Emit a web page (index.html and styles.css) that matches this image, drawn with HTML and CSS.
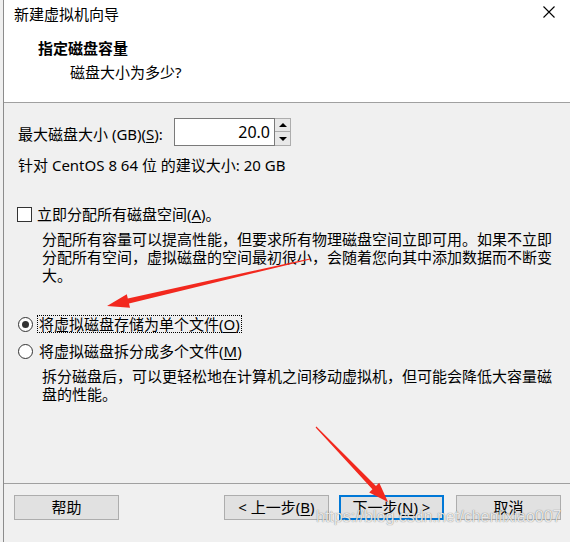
FILE: index.html
```html
<!DOCTYPE html>
<html lang="zh-CN">
<head>
    <meta charset="UTF-8">
    <title>新建虚拟机向导</title>
    <link rel="stylesheet" href="styles.css">
</head>
<body>
    <div class="window">
        <div class="head">
            <div class="titlebar">
                <span class="title">新建虚拟机向导</span>
                <svg class="close" width="12" height="12" viewBox="0 0 12 12">
                    <path d="M0.5 0.5 L11.5 11.5 M11.5 0.5 L0.5 11.5" stroke="#000" stroke-width="1.1" fill="none"/>
                </svg>
            </div>
            <div class="step-title">指定磁盘容量</div>
            <div class="step-sub">磁盘大小为多少?</div>
        </div>

        <div class="content">
            <div class="size-row">
                <span class="size-label">最大磁盘大小 (GB)(<u>S</u>):</span>
                <div class="spin">
                    <div class="spin-input">20.0</div>
                    <div class="spin-btns">
                        <span class="spin-btn"><span class="tri-up"></span></span>
                        <span class="spin-btn"><span class="tri-down"></span></span>
                    </div>
                </div>
            </div>
            <p class="hint">针对 CentOS 8 64 位 的建议大小: 20 GB</p>

            <div class="option check-row">
                <span class="checkbox"></span>
                <span>立即分配所有磁盘空间(<u>A</u>)。</span>
            </div>
            <p class="desc">分配所有容量可以提高性能，但要求所有物理磁盘空间立即可用。如果不立即<br>分配所有空间，虚拟磁盘的空间最初很小，会随着您向其中添加数据而不断变<br>大。</p>

            <div class="option radio-row first">
                <span class="radio checked"></span>
                <span class="focus">将虚拟磁盘存储为单个文件(<u>O</u>)</span>
            </div>
            <div class="option radio-row">
                <span class="radio"></span>
                <span class="plain">将虚拟磁盘拆分成多个文件(<u>M</u>)</span>
            </div>
            <p class="desc">拆分磁盘后，可以更轻松地在计算机之间移动虚拟机，但可能会降低大容量磁<br>盘的性能。</p>
        </div>

        <div class="footer">
            <button class="btn">帮助</button>
            <div class="nav">
                <button class="btn">&lt; 上一步(<u>B</u>)</button>
                <button class="btn default">下一步(<u>N</u>) &gt;</button>
                <button class="btn cancel">取消</button>
            </div>
        </div>
    </div>

    <!-- red annotation arrows -->
    <svg class="marks" width="570" height="542" viewBox="0 0 570 542">
        <polygon fill="#f2281e" points="310.1,259.5 129,303.4 130,307.8 107,306 126.8,294.2 127.8,298.6 309.9,258.5"/>
        <polygon fill="#f2281e" points="315.6,427.4 372.4,489.3 369.2,492.4 388,502 379.2,482.8 376,485.9 316.4,426.6"/>
    </svg>
    <div class="watermark">https://blog.csdn.net/chenlixiao007</div>
</body>
</html>
```

FILE: styles.css
```css
body {
    margin: 0;
    background-color: #f0f0f0;
    font-family: "Noto Sans", "Noto Sans CJK SC", sans-serif;
    font-size: 15px;
    color: #000;
}

u {
    text-decoration: underline;
    text-underline-offset: 2px;
}

.window {
    margin-left: 3px;
    border-left: 1px solid #8c8c8c;
    height: 542px;
    display: flex;
    flex-direction: column;
}

/* white header */
.head {
    background-color: #fff;
    height: 102px;
    border-bottom: 1px solid #a0a0a0;
}

.titlebar {
    height: 27px;
    display: flex;
    align-items: center;
    justify-content: space-between;
    padding: 0 15px 0 10px;
}

.title {
    line-height: 20px;
}

.close {
    display: block;
    margin-top: -3px;
}

.step-title {
    margin: 9px 0 0 34px;
    font-weight: bold;
    line-height: 24px;
}

.step-sub {
    margin-left: 66px;
    line-height: 24px;
}

/* body */
.content {
    flex: 1;
    padding: 15px 0 0 14px;
}

.size-row {
    display: flex;
    align-items: center;
    height: 28px;
}

.size-label {
    width: 156px;
    flex: none;
    line-height: 18px;
    margin-top: 3px;
}

.spin {
    display: flex;
    height: 28px;
}

.spin-input {
    width: 101px;
    height: 28px;
    box-sizing: border-box;
    border: 1px solid #7a7a7a;
    background-color: #fff;
    text-align: right;
    padding-right: 4px;
    line-height: 26px;
    font-size: 16px;
}

.spin-btns {
    display: flex;
    flex-direction: column;
    width: 16px;
}

.spin-btn {
    height: 14px;
    box-sizing: border-box;
    border: 1px solid #adadad;
    border-left: none;
    background-color: #e8e8e8;
    display: flex;
    align-items: center;
    justify-content: center;
}

.spin-btn + .spin-btn {
    border-top: none;
}

.tri-up {
    border-left: 4px solid transparent;
    border-right: 4px solid transparent;
    border-bottom: 4px solid #000;
}

.tri-down {
    border-left: 4px solid transparent;
    border-right: 4px solid transparent;
    border-top: 4px solid #000;
}

.hint {
    margin: 10px 0 0;
    line-height: 18px;
}

.option {
    display: flex;
    align-items: center;
    height: 18px;
    line-height: 18px;
}

.check-row {
    margin-top: 31px;
}

.checkbox {
    width: 13px;
    height: 13px;
    border: 1px solid #333;
    background-color: #fff;
    margin: 0 5px 0 -1px;
}

.desc {
    margin: 7px 0 0 24px;
    white-space: nowrap;
    line-height: 18px;
}

.radio-row.first {
    margin-top: 31px;
}

.radio-row + .radio-row {
    margin-top: 9px;
}

.radio {
    width: 13px;
    height: 13px;
    border: 1px solid #333;
    border-radius: 50%;
    background-color: #fff;
    margin-right: 4px;
    display: flex;
    align-items: center;
    justify-content: center;
}

.radio.checked::after {
    content: "";
    width: 7px;
    height: 7px;
    border-radius: 50%;
    background-color: #333;
}

.focus {
    border: 1px dotted #000;
    padding: 0 1px;
    line-height: 16px;
}

.plain {
    padding-left: 2px;
}

/* bottom buttons */
.footer {
    border-top: 1px solid #a0a0a0;
    height: 47px;
    padding: 11px 9px 0 10px;
    display: flex;
    justify-content: space-between;
    align-items: flex-start;
}

.btn {
    width: 105px;
    height: 25px;
    padding: 0;
    border: 1px solid #adadad;
    background-color: #e1e1e1;
    font-family: inherit;
    font-size: 15px;
    color: #000;
    line-height: 21px;
}

.btn.default {
    border: 2px solid #0078d7;
    margin-left: 10px;
}

.btn.cancel {
    margin-left: 12px;
}

.nav {
    display: flex;
}

.marks {
    position: absolute;
    left: 0;
    top: 0;
    pointer-events: none;
}

.watermark {
    position: absolute;
    left: 316px;
    top: 508px;
    font-family: "Liberation Sans", Arial, sans-serif;
    font-size: 16px;
    color: rgba(255, 255, 255, 0.85);
    text-shadow: 0 0 1px rgba(0, 0, 0, 0.6);
    pointer-events: none;
}
```
